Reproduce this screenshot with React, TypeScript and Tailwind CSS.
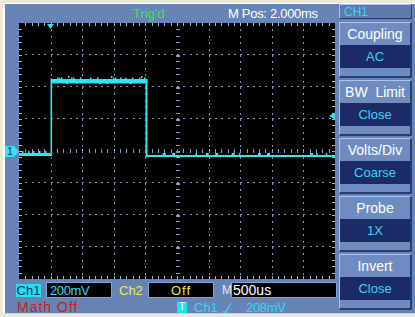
import React from 'react'

const W = 316
const H = 256
const DX = 31.6
const DY = 32

const font = { fontFamily: '"Liberation Sans", Arial, sans-serif' }

// deterministic noise for the trace
const noise = Array.from({ length: 60 }, (_, i) => {
  const v = Math.sin(i * 12.9898 + 4.1) * 43758.5453
  return v - Math.floor(v)
})

function Screen() {
  const dots: React.ReactNode[] = []
  for (let i = 1; i < 10; i++) {
    if (i === 5) continue
    const x = Math.round(i * DX)
    for (let j = 1; j < 40; j++) {
      dots.push(<rect key={`v${i}-${j}`} x={x} y={Math.round(j * 6.4)} width={1} height={2} fill="#8292b8" />)
    }
  }
  for (let k = 1; k < 8; k++) {
    if (k === 4) continue
    const y = k * DY - 1
    for (let j = 1; j < 50; j++) {
      dots.push(<rect key={`h${k}-${j}`} x={Math.round(j * 6.32)} y={y} width={2} height={1} fill="#8292b8" />)
    }
  }
  // centre cross ticks
  for (let j = 1; j < 50; j++) {
    const x = Math.round(j * 6.32)
    dots.push(<rect key={`ch${j}`} x={x} y={126} width={1} height={4} fill="#8a9ac0" />)
  }
  for (let j = 1; j < 40; j++) {
    const y = Math.round(j * 6.4)
    dots.push(<rect key={`cv${j}`} x={157} y={y} width={4} height={j % 5 === 0 ? 2 : 1} fill="#8a9ac0" />)
  }
  // edge ticks
  for (let j = 1; j < 50; j++) {
    const x = Math.round(j * 6.32)
    dots.push(<rect key={`et${j}`} x={x} y={0} width={1} height={3} fill="#a8b6d6" />)
    dots.push(<rect key={`eb${j}`} x={x} y={253} width={1} height={3} fill="#a8b6d6" />)
  }
  for (let j = 1; j < 40; j++) {
    const y = Math.round(j * 6.4)
    dots.push(<rect key={`el${j}`} x={0} y={y} width={3} height={1} fill="#a8b6d6" />)
    dots.push(<rect key={`er${j}`} x={313} y={y} width={3} height={1} fill="#a8b6d6" />)
  }

  const spikes: React.ReactNode[] = []
  noise.forEach((n, i) => {
    if (i < 40) {
      const x = 33 + Math.round(i * 2.35)
      if (n > 0.5) spikes.push(<rect key={`sh${i}`} x={x} y={n > 0.85 ? 53 : 54.5} width={1.5} height={2} fill="#2ee6f2" />)
      if (n < 0.2) spikes.push(<rect key={`sd${i}`} x={x} y={60} width={2} height={1} fill="#2ee6f2" />)
    } else {
      const x = 140 + (i - 40) * 8.6 + n * 5
      if (n > 0.35) spikes.push(<rect key={`sl${i}`} x={x} y={130} width={n > 0.7 ? 3 : 1.5} height={2} fill="#2ee6f2" />)
    }
  })
  ;[3, 9, 14, 20, 26].forEach((x, i) =>
    spikes.push(<rect key={`sp${i}`} x={x} y={128} width={1.5} height={2.5} fill="#2ee6f2" />),
  )

  return (
    <svg width={W} height={H} viewBox={`0 0 ${W} ${H}`} className="block bg-black">
      {dots}
      {/* trace */}
      <rect x={0} y={130} width={33} height={3} fill="#2ee6f2" />
      <rect x={31.5} y={55.5} width={1.6} height={77} fill="#2ee6f2" />
      <rect x={32} y={56} width={96} height={4.5} fill="#2ee6f2" />
      <rect x={126.5} y={56} width={2} height={78} fill="#2ee6f2" />
      <rect x={127} y={132} width={189} height={2} fill="#2ee6f2" />
      {spikes}
      {/* trigger position marker */}
      <polygon points="28,1 35,1 31.5,6" fill="#2ee6f2" />
      {/* trigger level marker */}
      <polygon points="310,93 316,89.5 316,96.5" fill="#2ee6f2" />
    </svg>
  )
}

function MenuBox({ title, value }: { title: string; value: string }) {
  return (
    <div className="h-[56px] flex flex-col border-t border-l border-t-[#a6c6f2] border-l-[#a6c6f2] border-r-2 border-b-2 border-r-[#2a3c74] border-b-[#2a3c74] bg-[#6e8cc2]">
      <div className="h-[22px] flex items-center justify-center text-[14px] text-white leading-none whitespace-pre" style={font}>
        {title}
      </div>
      <div className="h-[23px] flex items-center justify-center bg-[#1c2a66] text-[13px] text-[#34d8f6] leading-none" style={font}>
        {value}
      </div>
    </div>
  )
}

export default function App() {
  return (
    <div className="w-[415px] h-[317px] bg-[#ece9d8] pt-[3px] pl-[3px] pb-[3px] flex">
      <div className="flex-1 flex bg-[#6684b6] border-t border-l-2 border-b border-t-white border-l-white border-b-[#cfcfcf]">
        {/* left: screen and status */}
        <div className="w-[334px] flex flex-col">
          <div className="h-[19px] flex items-center text-[13px] leading-none" style={font}>
            <span className="ml-[128px] w-[95px] text-[#3ae64c]">Trig'd</span>
            <span className="text-white tracking-[-0.3px]">M Pos: 2.000ms</span>
          </div>
          <div className="h-[256px] flex">
            <div className="w-[14px] pt-[123px]">
              <svg width="14" height="11" viewBox="0 0 14 11" className="block">
                <polygon points="0,0 9,0 14,5.5 9,11 0,11" fill="#2ee6f2" />
                <text x="5" y="9" fontSize="10" fill="#1c2a66" textAnchor="middle" style={font}>
                  1
                </text>
              </svg>
            </div>
            <Screen />
          </div>
          <div className="h-[34px] flex flex-col pt-[3px] leading-none" style={font}>
            <div className="h-[16px] flex items-center">
              <div className="ml-[11px] w-[25px] h-[13px] bg-[#22e0f0] text-[#1c2a66] text-[13px] flex items-center justify-center">
                Ch1
              </div>
              <div className="ml-[5px] w-[66px] h-[16px] bg-black border border-[#7ca4dc] text-[#34d8f6] text-[13px] flex items-center pl-[3px] tracking-[-0.4px]">
                200mV
              </div>
              <div className="ml-[7px] w-[29px] text-[#ecec44] text-[13px]">Ch2</div>
              <div className="w-[66px] h-[16px] bg-black border border-[#7ca4dc] text-[#ecec44] text-[13px] flex items-center justify-center tracking-[1px]">
                Off
              </div>
              <div className="ml-[8px] w-[9px] text-[#e8ecf4] text-[12px]">M</div>
              <div className="w-[106px] h-[16px] bg-black border border-[#7ca4dc] text-white text-[14px] flex items-center pl-[1px]">
                500us
              </div>
            </div>
            <div className="h-[12px] mt-[3px] flex items-center">
              <span className="ml-[12px] w-[160px] text-[#c62222] text-[14px] tracking-[1px]">Math Off</span>
              <div className="w-[10px] h-[11px] bg-[#22e0f0] text-white text-[10px] flex items-center justify-center">T</div>
              <span className="ml-[7px] w-[29px] text-[#34d8f6] text-[13px]">Ch1</span>
              <svg width="9" height="11" viewBox="0 0 9 11" className="block">
                <polyline points="0,10 3,10 8,1" fill="none" stroke="#34d8f6" strokeWidth="1.3" />
              </svg>
              <span className="ml-[14px] text-[#34d8f6] text-[13px] tracking-[-0.3px]">208mV</span>
            </div>
          </div>
        </div>
        {/* right: channel menu */}
        <div className="w-[73px] flex flex-col">
          <div className="h-[15px] flex items-center bg-[#5c7ab0] border-t border-l border-t-[#a6c6f2] border-l-[#a6c6f2] border-r border-b border-r-[#2a3c74] border-b-[#2a3c74] text-[#34d8f6] text-[12px] pl-[4px] leading-none" style={font}>
            CH1
          </div>
          <div className="mt-[3px] flex flex-col gap-[2px]">
            <MenuBox title="Coupling" value="AC" />
            <MenuBox title="BW  Limit" value="Close" />
            <MenuBox title="Volts/Div" value="Coarse" />
            <MenuBox title="Probe" value="1X" />
            <MenuBox title="Invert" value="Close" />
          </div>
        </div>
      </div>
    </div>
  )
}
